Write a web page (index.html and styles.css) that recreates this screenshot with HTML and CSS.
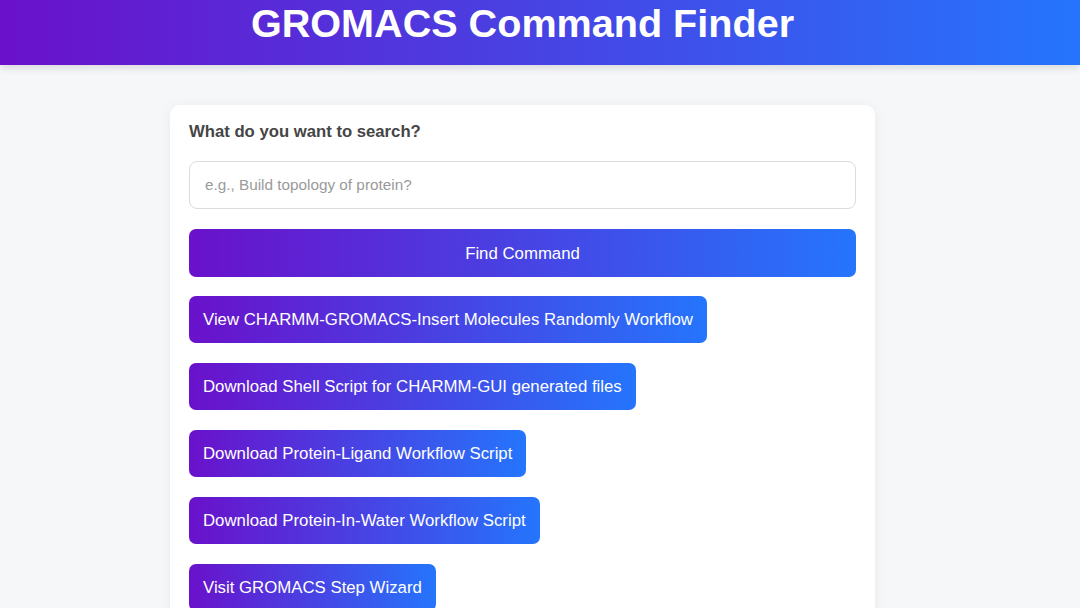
FILE: index.html
```html
<!DOCTYPE html>
<html lang="en">
<head>
<meta charset="utf-8">
<title>GROMACS Command Finder</title>
<link rel="stylesheet" href="styles.css">
</head>
<body>
<header class="topbar">
  <div class="topbar-inner">
    <h1 class="title">GROMACS Command Finder</h1>
  </div>
</header>
<main class="page">
  <section class="card">
    <label class="label" for="q">What do you want to search?</label>
    <input id="q" class="search" type="text" placeholder="e.g., Build topology of protein?">
    <button class="btn btn-full">Find Command</button>
    <div class="links">
      <button class="btn">View CHARMM-GROMACS-Insert Molecules Randomly Workflow</button>
      <button class="btn">Download Shell Script for CHARMM-GUI generated files</button>
      <button class="btn">Download Protein-Ligand Workflow Script</button>
      <button class="btn">Download Protein-In-Water Workflow Script</button>
      <button class="btn">Visit GROMACS Step Wizard</button>
    </div>
  </section>
</main>
</body>
</html>
```
FILE: styles.css
```css
* { box-sizing: border-box; }
html, body { margin: 0; padding: 0; }
body {
  background: #f6f7f9;
  font-family: "Liberation Sans", Arial, sans-serif;
  color: #333;
  overflow: hidden;
}
.topbar {
  height: 65px;
  background: linear-gradient(90deg, #6a11cb 0%, #2575fc 100%);
  box-shadow: 0 3px 8px rgba(0,0,0,0.12);
}
.topbar-inner {
  width: 1045px;
  display: flex;
  justify-content: center;
}
.title {
  margin: 0;
  padding-top: 3px;
  color: #fff;
  font-size: 39.6px;
  font-weight: 700;
  letter-spacing: 0;
  line-height: 40px;
}
.page {
  width: 1045px;
  display: flex;
  justify-content: center;
  padding-top: 40px;
}
.card {
  width: 705px;
  background: #fff;
  border-radius: 10px;
  box-shadow: 0 2px 14px rgba(0,0,0,0.06);
  padding: 17px 19px 20px;
  display: flex;
  flex-direction: column;
}
.label {
  font-size: 16.7px;
  font-weight: 700;
  color: #454545;
  line-height: 20px;
  margin-bottom: 19px;
}
.search {
  height: 48px;
  border: 1px solid #dcdcdc;
  border-radius: 8px;
  padding: 0 15px;
  font-family: inherit;
  font-size: 15.3px;
  color: #333;
  outline: none;
}
.search::placeholder { color: #9a9a9a; }
.btn {
  height: 47px;
  border: none;
  border-radius: 7px;
  background: linear-gradient(90deg, #6a11cb 0%, #2575fc 100%);
  color: #fff;
  font-family: inherit;
  font-size: 16.8px;
  padding: 1px 14px 0;
  cursor: pointer;
}
.btn-full {
  margin-top: 20px;
  width: 100%;
  height: 48px;
}
.links {
  display: flex;
  flex-direction: column;
  align-items: flex-start;
  gap: 20px;
  margin-top: 19px;
}
```
